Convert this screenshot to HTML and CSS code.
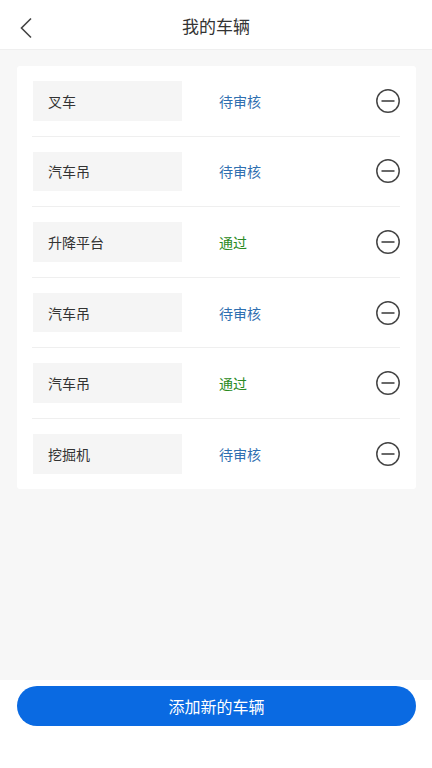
FILE: index.html
```html
<!DOCTYPE html>
<html lang="zh">
<head>
<meta charset="utf-8">
<link rel="stylesheet" href="styles.css">
</head>
<body>
<div class="page">
  <header class="header">
    <svg class="back" width="14" height="22" viewBox="0 0 14 22"><path d="M12 1.5 L2.5 11 L12 20.5" fill="none" stroke="#444" stroke-width="1.6"/></svg>
    <h1 class="title">我的车辆</h1>
  </header>
  <main class="content">
    <div class="card">
      <div class="row"><div class="name">叉车</div><div class="status pending">待审核</div><svg class="minus" width="26" height="26" viewBox="0 0 26 26"><circle cx="13" cy="13" r="11.2" fill="none" stroke="#444" stroke-width="1.5"/><path d="M6.5 13 H19.5" stroke="#444" stroke-width="1.6"/></svg></div>
      <div class="row"><div class="name">汽车吊</div><div class="status pending">待审核</div><svg class="minus" width="26" height="26" viewBox="0 0 26 26"><circle cx="13" cy="13" r="11.2" fill="none" stroke="#444" stroke-width="1.5"/><path d="M6.5 13 H19.5" stroke="#444" stroke-width="1.6"/></svg></div>
      <div class="row"><div class="name">升降平台</div><div class="status passed">通过</div><svg class="minus" width="26" height="26" viewBox="0 0 26 26"><circle cx="13" cy="13" r="11.2" fill="none" stroke="#444" stroke-width="1.5"/><path d="M6.5 13 H19.5" stroke="#444" stroke-width="1.6"/></svg></div>
      <div class="row"><div class="name">汽车吊</div><div class="status pending">待审核</div><svg class="minus" width="26" height="26" viewBox="0 0 26 26"><circle cx="13" cy="13" r="11.2" fill="none" stroke="#444" stroke-width="1.5"/><path d="M6.5 13 H19.5" stroke="#444" stroke-width="1.6"/></svg></div>
      <div class="row"><div class="name">汽车吊</div><div class="status passed">通过</div><svg class="minus" width="26" height="26" viewBox="0 0 26 26"><circle cx="13" cy="13" r="11.2" fill="none" stroke="#444" stroke-width="1.5"/><path d="M6.5 13 H19.5" stroke="#444" stroke-width="1.6"/></svg></div>
      <div class="row"><div class="name">挖掘机</div><div class="status pending">待审核</div><svg class="minus" width="26" height="26" viewBox="0 0 26 26"><circle cx="13" cy="13" r="11.2" fill="none" stroke="#444" stroke-width="1.5"/><path d="M6.5 13 H19.5" stroke="#444" stroke-width="1.6"/></svg></div>
    </div>
  </main>
  <footer class="footer">
    <button class="add-btn">添加新的车辆</button>
  </footer>
</div>
</body>
</html>
```
FILE: styles.css
```css
* { box-sizing: border-box; }
html, body { margin: 0; padding: 0; }
body {
  font-family: "Noto Sans CJK SC", "Noto Sans", sans-serif;
  color: #333;
  background: #f7f7f7;
}
.page {
  width: 432px;
  height: 768px;
  display: flex;
  flex-direction: column;
}
.header {
  height: 50px;
  background: #fff;
  border-bottom: 1px solid #efefef;
  display: flex;
  align-items: center;
  justify-content: center;
  position: relative;
  flex-shrink: 0;
}
.back {
  position: absolute;
  left: 19px;
  top: 17px;
}
.title {
  margin: 0;
  font-size: 17px;
  font-weight: 400;
  color: #333;
  line-height: 1;
  padding-top: 2px;
}
.content {
  flex: 1;
  padding: 16px 16px 0 17px;
  background: #f7f7f7;
}
.card {
  background: #fff;
  border-radius: 3px;
  padding: 0 16px 0 15px;
}
.row {
  display: flex;
  align-items: center;
  padding: 15px 0;
  border-bottom: 1px solid #efefef;
}
.row:last-child { border-bottom: none; }
.name {
  width: 149px;
  height: 39.6px;
  margin-left: 1px;
  background: #f5f5f5;
  display: flex;
  align-items: center;
  padding-left: 15px;
  font-size: 14px;
  color: #333;
}
.status {
  margin-left: 37px;
  font-size: 14px;
  flex: 1;
}
.pending { color: #2f6fb0; }
.passed { color: #2a8a22; }
.minus { margin-right: -1px; }
.footer {
  height: 88px;
  background: #fff;
  padding: 6px 16px 0 17px;
  flex-shrink: 0;
}
.add-btn {
  width: 100%;
  height: 40px;
  border: none;
  border-radius: 20px;
  background: #0a6ae2;
  color: #fff;
  font-family: "Noto Sans CJK SC", "Noto Sans", sans-serif;
  font-size: 16px;
  padding: 0;
}
```
